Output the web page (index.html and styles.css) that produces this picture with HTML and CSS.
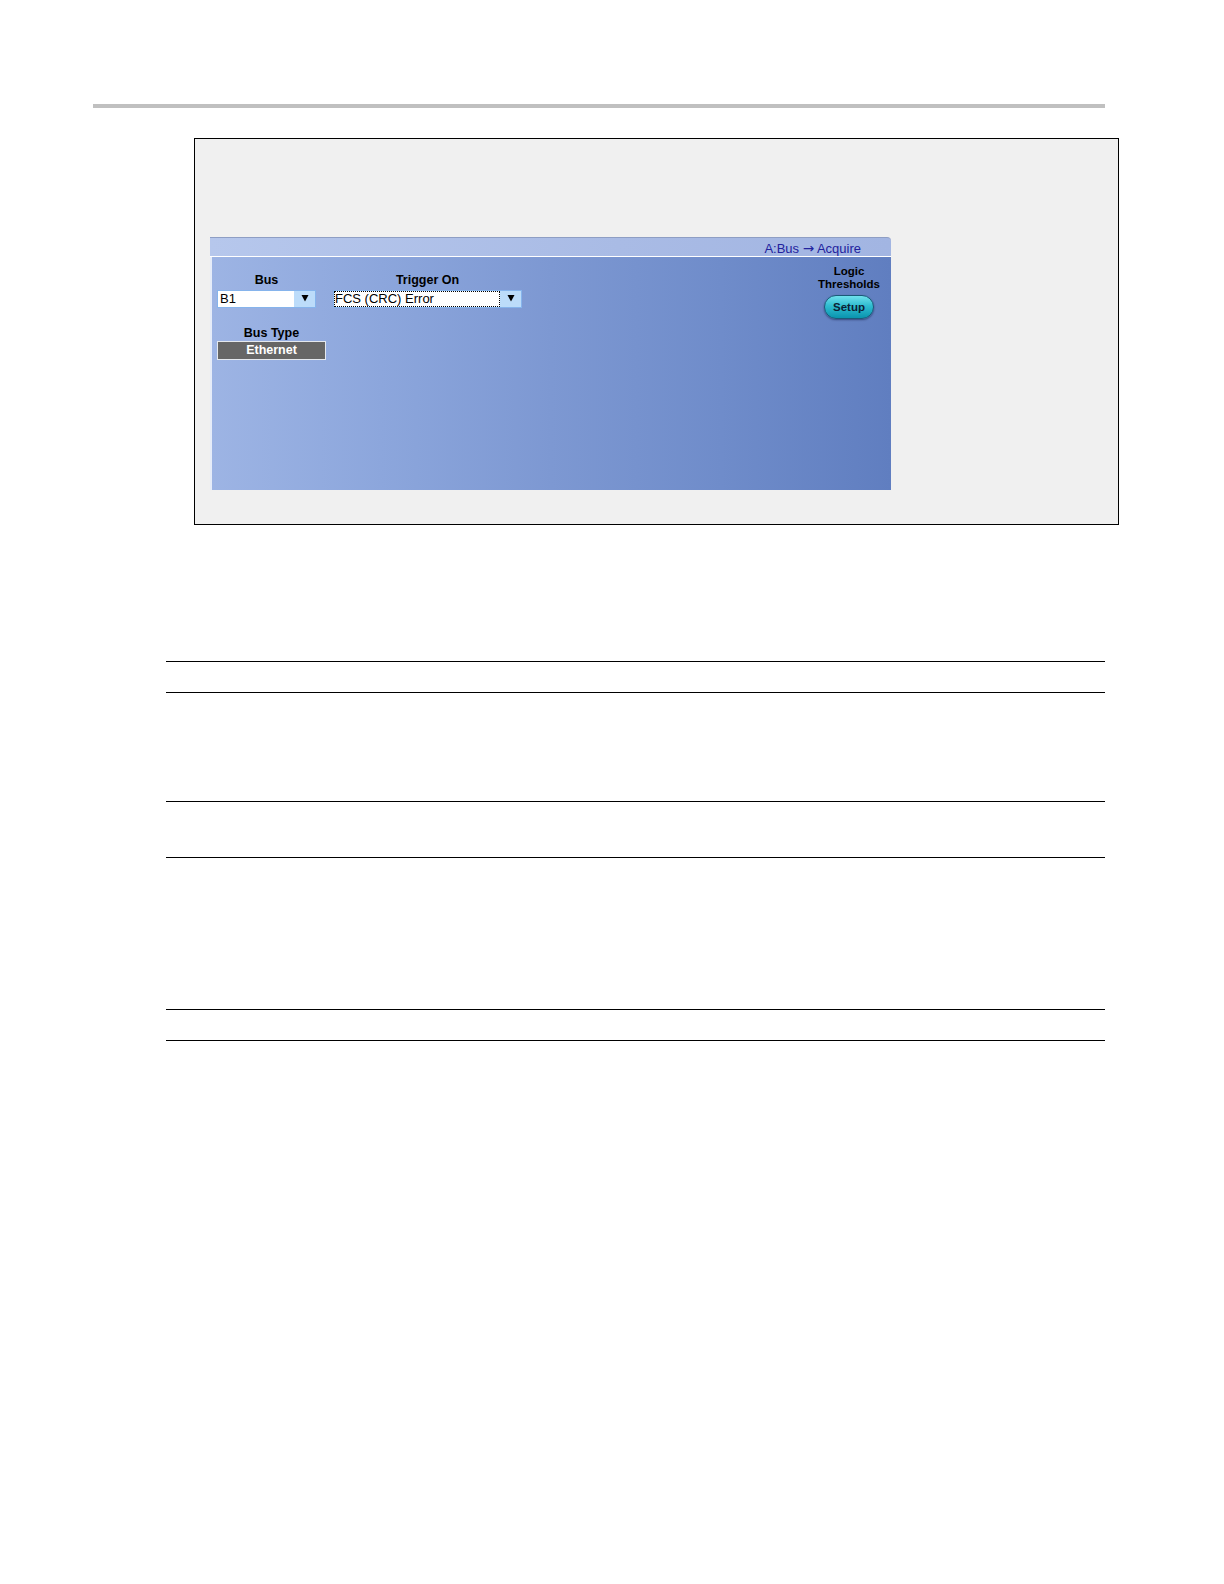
FILE: index.html
```html
<!DOCTYPE html>
<html>
<head>
<meta charset="utf-8">
<title>Trigger On FCS (CRC) Error</title>
<link rel="stylesheet" href="styles.css">
</head>
<body>
<div class="page">
  <div class="top-rule"></div>

  <div class="figure">
    <div class="panel">
      <div class="panel-head"><span class="crumb">A:Bus <span class="to">&rarr;</span> Acquire</span></div>
      <div class="panel-body">
        <div class="controls">
          <div class="row">
            <div class="field field-bus">
              <div class="label">Bus</div>
              <div class="select select-bus">
                <span class="value">B1</span>
                <span class="arrow"><svg width="8" height="8" viewBox="0 0 8 8"><path d="M0.5 1 L7.5 1 L4 7.5 Z" fill="#000"/></svg></span>
              </div>
            </div>
            <div class="field field-trig">
              <div class="label">Trigger On</div>
              <div class="select select-trig">
                <span class="value value-focus">FCS (CRC) Error</span>
                <span class="arrow"><svg width="8" height="8" viewBox="0 0 8 8"><path d="M0.5 1 L7.5 1 L4 7.5 Z" fill="#000"/></svg></span>
              </div>
            </div>
          </div>
          <div class="field field-type">
            <div class="label label-tight">Bus Type</div>
            <div class="ethernet">Ethernet</div>
          </div>
        </div>
        <div class="logic">
          <div class="logic-label">Logic<br>Thresholds</div>
          <div class="setup">Setup</div>
        </div>
      </div>
    </div>
  </div>

  <div class="table">
    <div class="trow h31"></div>
    <div class="trow h109"></div>
    <div class="trow h56"></div>
    <div class="trow h152"></div>
    <div class="trow h32"></div>
  </div>
</div>
</body>
</html>
```

FILE: styles.css
```css
html, body {
  margin: 0;
  padding: 0;
  background: #ffffff;
  font-family: "Liberation Sans", Arial, sans-serif;
}

.page {
  width: 1224px;
  min-height: 1584px;
  padding-top: 104px;
  box-sizing: border-box;
}

.top-rule {
  margin-left: 93px;
  width: 1012px;
  height: 4px;
  background: #c0c0c0;
}

.figure {
  margin-top: 30px;
  margin-left: 194px;
  width: 925px;
  height: 387px;
  box-sizing: border-box;
  border: 1px solid #000;
  background: #f0f0f0;
  padding: 98px 0 0 15px;
}

.panel {
  width: 681px;
  height: 253px;
  display: flex;
  flex-direction: column;
}

.panel-head {
  height: 20px;
  box-sizing: border-box;
  border-top: 1px solid #8e9ec4;
  border-bottom: 1px solid #ffffff;
  border-top-right-radius: 4px;
  background: linear-gradient(to right, #b6c7ec, #a9bbe5 60%, #a2b5e2);
  display: flex;
  justify-content: flex-end;
  padding-right: 30px;
  padding-top: 2px;
}

.crumb {
  font-size: 13px;
  line-height: 16px;
  color: #22229e;
  white-space: nowrap;
}

.to {
  font-family: "DejaVu Sans", sans-serif;
  font-size: 13.5px;
}

.panel-body {
  flex: 1;
  box-sizing: border-box;
  border-left: 2px solid #e6ecf8;
  background: linear-gradient(to right, #9db4e4 0%, #8ca6dc 25%, #7d98d2 50%, #6f8cca 75%, #607ec0 100%);
  display: flex;
  justify-content: space-between;
  padding: 0 10px 0 5px;
}

.controls {
  padding-top: 16px;
  display: flex;
  flex-direction: column;
  align-items: flex-start;
}

.row {
  display: flex;
  gap: 17px;
}

.field {
  display: flex;
  flex-direction: column;
  align-items: center;
}

.label {
  font-size: 12.5px;
  font-weight: bold;
  line-height: 15px;
  color: #000;
  margin-bottom: 2px;
}

.label-tight {
  margin-bottom: 0;
}

.select {
  display: flex;
  height: 18px;
  box-sizing: border-box;
  border: 1px solid #86b4ec;
  background: #ffffff;
}

.select-bus { width: 99px; }
.select-trig { width: 189px; }

.value {
  flex: 1;
  font-size: 13px;
  line-height: 16px;
  color: #000;
  padding-left: 2px;
  box-sizing: border-box;
}

.value-focus {
  outline: 1px dotted #000;
  outline-offset: -1px;
  padding-left: 1px;
}

.arrow {
  width: 21px;
  background: #bcdcfa;
  display: flex;
  align-items: center;
  justify-content: center;
}

.arrow svg {
  display: block;
  margin-top: -2px;
}

.field-type {
  margin-top: 18px;
}

.ethernet {
  width: 109px;
  height: 19px;
  box-sizing: border-box;
  border: 1px solid #e4e8ee;
  background: #666666;
  color: #ffffff;
  font-size: 12.5px;
  font-weight: bold;
  line-height: 17px;
  text-align: center;
}

.logic {
  padding-top: 8px;
  display: flex;
  flex-direction: column;
  align-items: center;
  width: 64px;
}

.logic-label {
  font-size: 11.5px;
  font-weight: bold;
  line-height: 13px;
  text-align: center;
  color: #000;
}

.setup {
  margin-top: 4px;
  width: 50px;
  height: 24px;
  box-sizing: border-box;
  border-radius: 12px;
  border: 1px solid #1a5a78;
  background: linear-gradient(to bottom, #6fe0ec 0%, #2fbcd0 45%, #0a94ae 100%);
  box-shadow: 0 1px 2px rgba(0, 0, 40, 0.45);
  font-size: 11.5px;
  font-weight: bold;
  line-height: 22px;
  text-align: center;
  color: #0c1e34;
}

.table {
  margin-top: 136px;
  margin-left: 166px;
  width: 939px;
  border-bottom: 1px solid #000;
}

.trow {
  border-top: 1px solid #000;
  box-sizing: border-box;
}

.h31 { height: 31px; }
.h109 { height: 109px; }
.h56 { height: 56px; }
.h152 { height: 152px; }
.h32 { height: 31px; }
```
